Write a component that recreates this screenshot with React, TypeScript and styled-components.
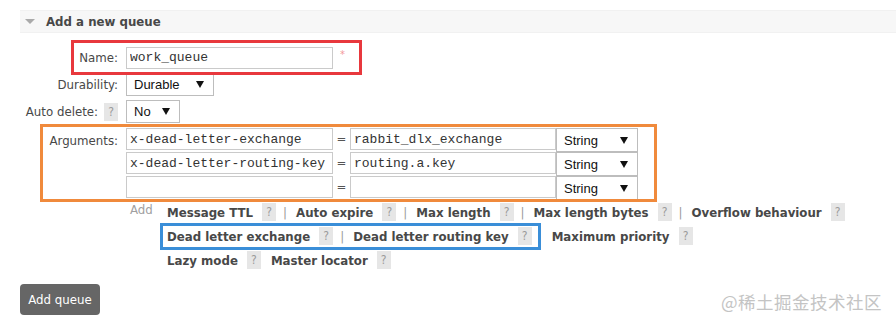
import styled, { createGlobalStyle } from "styled-components";

const GlobalStyle = createGlobalStyle`
  html, body {
    margin: 0;
    padding: 0;
    background: #fff;
  }
  body {
    font-family: "DejaVu Sans Condensed", "DejaVu Sans", Verdana, sans-serif;
    font-size: 13.1px;
    color: #484848;
  }
`;

interface OptionLink {
  label: string;
  sep?: boolean;
  gapAfter?: number;
}

const optionRows: OptionLink[][] = [
  [
    { label: "Message TTL", sep: true },
    { label: "Auto expire", sep: true },
    { label: "Max length", sep: true },
    { label: "Max length bytes", sep: true },
    { label: "Overflow behaviour" },
  ],
  [
    { label: "Dead letter exchange", sep: true },
    { label: "Dead letter routing key", gapAfter: 20 },
    { label: "Maximum priority" },
  ],
  [{ label: "Lazy mode", gapAfter: 10 }, { label: "Master locator" }],
];

const args = [
  { key: "x-dead-letter-exchange", value: "rabbit_dlx_exchange" },
  { key: "x-dead-letter-routing-key", value: "routing.a.key" },
  { key: "", value: "" },
];

function Select({ value, width, height }: { value: string; width: number; height: number }) {
  return (
    <SelectBox $width={width} $height={height}>
      <span>{value}</span>
      <Arrow />
    </SelectBox>
  );
}

function App() {
  return (
    <>
      <GlobalStyle />
      <Page>
        <SectionHeader>
          <Toggle />
          <span>Add a new queue</span>
        </SectionHeader>

        <Form>
          <FieldRow>
            <Label>Name:</Label>
            <Value>
              <TextInput $width={207} defaultValue="work_queue" />
              <Required>*</Required>
            </Value>
          </FieldRow>
          <FieldRow>
            <Label>Durability:</Label>
            <Value>
              <Select value="Durable" width={88} height={23} />
            </Value>
          </FieldRow>
          <FieldRow>
            <Label>
              Auto delete:
              <Help>?</Help>
            </Label>
            <Value>
              <Select value="No" width={54} height={23} />
            </Value>
          </FieldRow>

          <ArgsRow>
            <Label $top>Arguments:</Label>
            <ArgsColumn>
              {args.map((a, i) => (
                <ArgLine key={i}>
                  <TextInput $width={207} defaultValue={a.key} />
                  <Equals>=</Equals>
                  <TextInput $width={206} defaultValue={a.value} />
                  <Select value="String" width={82} height={24} />
                </ArgLine>
              ))}
              <AddLine>
                <AddText>Add</AddText>
                <Options>
                  {optionRows.map((row, r) => (
                    <OptionRow key={r}>
                      {row.map((o) => (
                        <OptionItem key={o.label} $gap={o.gapAfter ?? 0}>
                          <OptionLabel>{o.label}</OptionLabel>
                          <Help>?</Help>
                          {o.sep && <Sep>|</Sep>}
                        </OptionItem>
                      ))}
                    </OptionRow>
                  ))}
                </Options>
              </AddLine>
            </ArgsColumn>
          </ArgsRow>

          <SubmitButton type="button">Add queue</SubmitButton>
        </Form>

        <Mark $color="#e8383d" style={{ left: 71, top: 40, width: 291, height: 35 }} />
        <Mark $color="#f08a3c" style={{ left: 40, top: 124, width: 617, height: 78 }} />
        <Mark $color="#3a8ed8" style={{ left: 160, top: 223, width: 381, height: 27 }} />

        <Watermark>@稀土掘金技术社区</Watermark>
      </Page>
    </>
  );
}

const Page = styled.div`
  position: relative;
  width: 896px;
  height: 328px;
  padding: 10px 0 0 20px;
  box-sizing: border-box;
  overflow: hidden;
`;

const SectionHeader = styled.div`
  display: flex;
  align-items: center;
  gap: 11px;
  height: 23px;
  box-sizing: border-box;
  padding-left: 5px;
  background: #f7f7f7;
  border-top: 1px solid #f1f1f1;
  border-bottom: 1px solid #f1f1f1;
  font-weight: bold;
`;

const Toggle = styled.span`
  width: 0;
  height: 0;
  border-left: 5px solid transparent;
  border-right: 5px solid transparent;
  border-top: 5px solid #aaa;
`;

const Form = styled.div`
  display: flex;
  flex-direction: column;
  margin-top: 11px;
`;

const FieldRow = styled.div`
  display: grid;
  grid-template-columns: 106px auto;
  align-items: center;
  height: 27px;
`;

const Label = styled.div<{ $top?: boolean }>`
  display: flex;
  align-items: center;
  justify-content: flex-end;
  gap: 6px;
  padding-right: 8px;
  white-space: nowrap;
  align-self: ${({ $top }) => ($top ? "start" : "center")};
  height: ${({ $top }) => ($top ? "24px" : "auto")};
`;

const Value = styled.div`
  display: flex;
  align-items: center;
`;

const TextInput = styled.input<{ $width: number }>`
  width: ${({ $width }) => $width}px;
  height: 22px;
  box-sizing: border-box;
  margin: 0;
  padding: 0 3px;
  border: 1px solid #cacaca;
  font-family: "Liberation Mono", "Courier New", monospace;
  font-size: 13px;
  color: #333;
  background: #fff;
  outline: none;
`;

const Required = styled.span`
  margin-left: 7px;
  margin-top: -6px;
  color: #f39a9a;
  font-size: 11px;
`;

const SelectBox = styled.div<{ $width: number; $height: number }>`
  display: flex;
  align-items: center;
  justify-content: space-between;
  width: ${({ $width }) => $width}px;
  height: ${({ $height }) => $height}px;
  box-sizing: border-box;
  padding: 0 9px 0 7px;
  border: 1px solid #bdbdbd;
  background: #fff;
  font-family: "Liberation Sans", Arial, sans-serif;
  font-size: 13px;
  color: #111;
`;

const Arrow = styled.span`
  width: 0;
  height: 0;
  border-left: 4px solid transparent;
  border-right: 4px solid transparent;
  border-top: 7px solid #111;
`;

const Help = styled.span`
  display: inline-flex;
  align-items: center;
  justify-content: center;
  width: 14px;
  height: 18px;
  background: #e6e6e6;
  color: #9a9a9a;
  font-weight: normal;
  font-size: 12px;
`;

const ArgsRow = styled.div`
  display: grid;
  grid-template-columns: 106px auto;
  margin-top: 3px;
`;

const ArgsColumn = styled.div`
  display: flex;
  flex-direction: column;
`;

const ArgLine = styled.div`
  display: flex;
  align-items: flex-start;
  height: 24px;
`;

const Equals = styled.span`
  width: 17px;
  height: 22px;
  line-height: 22px;
  text-align: center;
  color: #555;
`;

const AddLine = styled.div`
  display: flex;
  align-items: flex-start;
`;

const AddText = styled.span`
  width: 41px;
  padding-left: 4px;
  box-sizing: border-box;
  line-height: 20px;
  color: #a0a0a0;
`;

const Options = styled.div`
  display: flex;
  flex-direction: column;
`;

const OptionRow = styled.div`
  display: flex;
  align-items: center;
  height: 24px;
  white-space: nowrap;
`;

const OptionItem = styled.span<{ $gap: number }>`
  display: inline-flex;
  align-items: center;
  margin-right: ${({ $gap }) => $gap}px;
`;

const OptionLabel = styled.span`
  font-weight: bold;
  margin-right: 9px;
`;

const Sep = styled.span`
  margin: 0 9px 0 7px;
  color: #9a9a9a;
`;

const SubmitButton = styled.button`
  align-self: flex-start;
  margin-top: 12px;
  width: 80px;
  height: 31px;
  padding: 0;
  border: none;
  border-radius: 4px;
  background: #666;
  color: #fff;
  font-family: "DejaVu Sans Condensed", "DejaVu Sans", Verdana, sans-serif;
  font-size: 13.1px;
`;

const Mark = styled.div<{ $color: string }>`
  position: absolute;
  box-sizing: border-box;
  border: 3px solid ${({ $color }) => $color};
  pointer-events: none;
`;

const Watermark = styled.div`
  position: absolute;
  right: 14px;
  bottom: 14px;
  font-family: "Noto Sans CJK SC", sans-serif;
  font-size: 17.5px;
  color: #c4c4c4;
  letter-spacing: 0.5px;
`;

export default App;
